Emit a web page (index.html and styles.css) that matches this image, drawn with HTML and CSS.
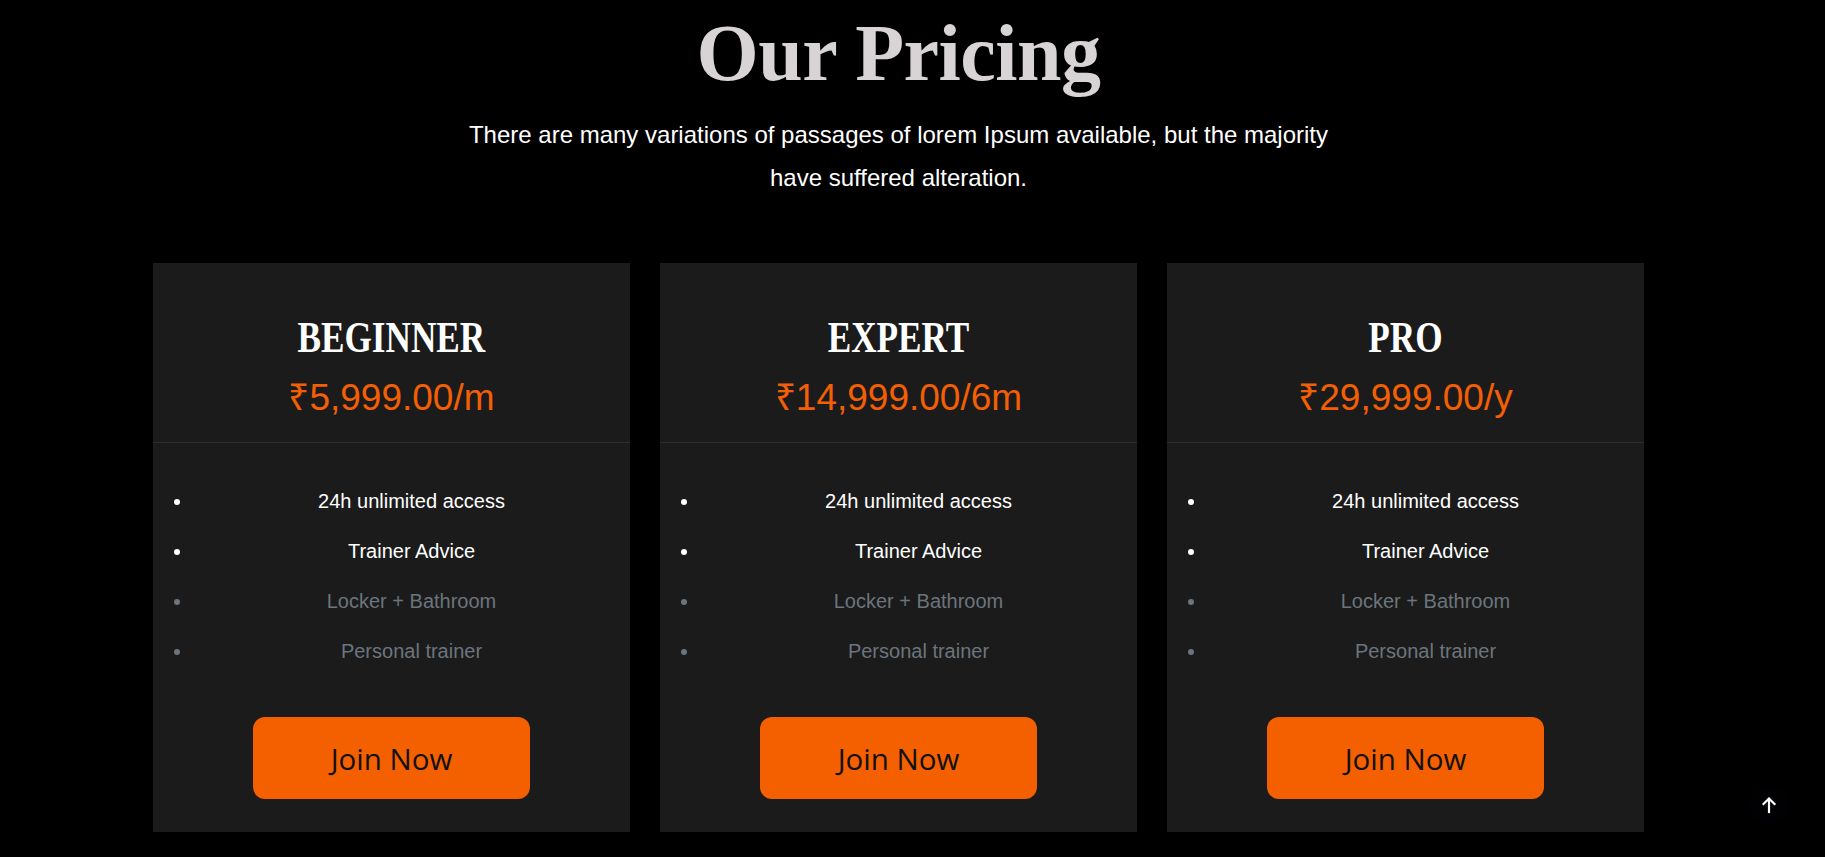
FILE: index.html
```html
<!DOCTYPE html>
<html lang="en">
<head>
<meta charset="utf-8">
<title>Our Pricing</title>
<link rel="stylesheet" href="styles.css">
</head>
<body>
<div class="page">
  <section class="pricing">
    <h1 class="title">Our Pricing</h1>
    <p class="subtitle">There are many variations of passages of lorem Ipsum available, but the majority have suffered alteration.</p>
    <div class="cards">
      <div class="card">
        <div class="card-head">
          <h3 class="plan"><span>BEGINNER</span></h3>
          <div class="price">₹5,999.00/m</div>
        </div>
        <div class="card-body">
          <ul class="features">
            <li>24h unlimited access</li>
            <li>Trainer Advice</li>
            <li class="muted">Locker + Bathroom</li>
            <li class="muted">Personal trainer</li>
          </ul>
          <a class="join" href="#">Join Now</a>
        </div>
      </div>
      <div class="card">
        <div class="card-head">
          <h3 class="plan"><span>EXPERT</span></h3>
          <div class="price">₹14,999.00/6m</div>
        </div>
        <div class="card-body">
          <ul class="features">
            <li>24h unlimited access</li>
            <li>Trainer Advice</li>
            <li class="muted">Locker + Bathroom</li>
            <li class="muted">Personal trainer</li>
          </ul>
          <a class="join" href="#">Join Now</a>
        </div>
      </div>
      <div class="card">
        <div class="card-head">
          <h3 class="plan"><span>PRO</span></h3>
          <div class="price">₹29,999.00/y</div>
        </div>
        <div class="card-body">
          <ul class="features">
            <li>24h unlimited access</li>
            <li>Trainer Advice</li>
            <li class="muted">Locker + Bathroom</li>
            <li class="muted">Personal trainer</li>
          </ul>
          <a class="join" href="#">Join Now</a>
        </div>
      </div>
    </div>
  </section>
</div>
<a class="to-top" href="#" aria-label="Back to top">
  <svg width="16" height="18" viewBox="0 0 16 18" fill="none" stroke="#fff" stroke-width="2.2" stroke-linecap="square" stroke-linejoin="miter"><path d="M8 16V3"/><path d="M2.5 8L8 2.5L13.5 8"/></svg>
</a>
</body>
</html>
```

FILE: styles.css
```css
html, body {
  margin: 0;
  padding: 0;
  background: #000;
}

body {
  font-family: "Liberation Sans", Arial, sans-serif;
  color: #fff;
  height: 857px;
  overflow: hidden;
}

.page {
  width: 1797px;
}

.pricing {
  display: flex;
  flex-direction: column;
  align-items: center;
}

.title {
  margin: 5px 0 0;
  font-family: "Liberation Serif", "Times New Roman", serif;
  font-weight: 700;
  font-size: 80px;
  line-height: 96px;
  color: #d8d4d5;
  letter-spacing: -0.5px;
}

.subtitle {
  margin: 12px 0 0;
  width: 900px;
  text-align: center;
  font-size: 24px;
  line-height: 43.2px;
  color: #fff;
}

.cards {
  display: flex;
  gap: 30px;
  margin-top: 64px;
}

.card {
  width: 477px;
  height: 569px;
  background: #1b1b1b;
  display: flex;
  flex-direction: column;
}

.card-head {
  padding: 49px 0 21px;
  border-bottom: 1px solid #2d2d2d;
  text-align: center;
}

.plan {
  margin: 0 0 11px;
  font-family: "Liberation Serif", "Times New Roman", serif;
  font-weight: 700;
  font-size: 44px;
  line-height: 52.8px;
  color: #fff;
}

.plan span {
  display: inline-block;
  transform: scaleX(0.8);
}

.price {
  font-size: 37px;
  line-height: 44.4px;
  color: #f25f05;
}

.card-body {
  padding: 43px 0 34px;
  display: flex;
  flex-direction: column;
  align-items: center;
}

.features {
  align-self: stretch;
  margin: 0;
  padding: 0 0 0 40px;
  list-style: disc;
  text-align: center;
}

.features li {
  font-size: 20px;
  line-height: 30px;
  margin-bottom: 20px;
  color: #fff;
}

.features li:last-child {
  margin-bottom: 0;
}

.features li.muted {
  color: #6c757d;
}

.join {
  margin-top: 51px;
  width: 277px;
  height: 82px;
  border-radius: 12px;
  background: #f46000;
  color: #111;
  text-decoration: none;
  font-family: "Open Sans", sans-serif;
  font-size: 29.5px;
  display: flex;
  align-items: center;
  justify-content: center;
  padding-top: 2px;
  box-sizing: border-box;
}

.to-top {
  position: fixed;
  left: 1749px;
  top: 785px;
  width: 40px;
  height: 40px;
  border-radius: 50%;
  background: #010103;
  display: flex;
  align-items: center;
  justify-content: center;
}
```
